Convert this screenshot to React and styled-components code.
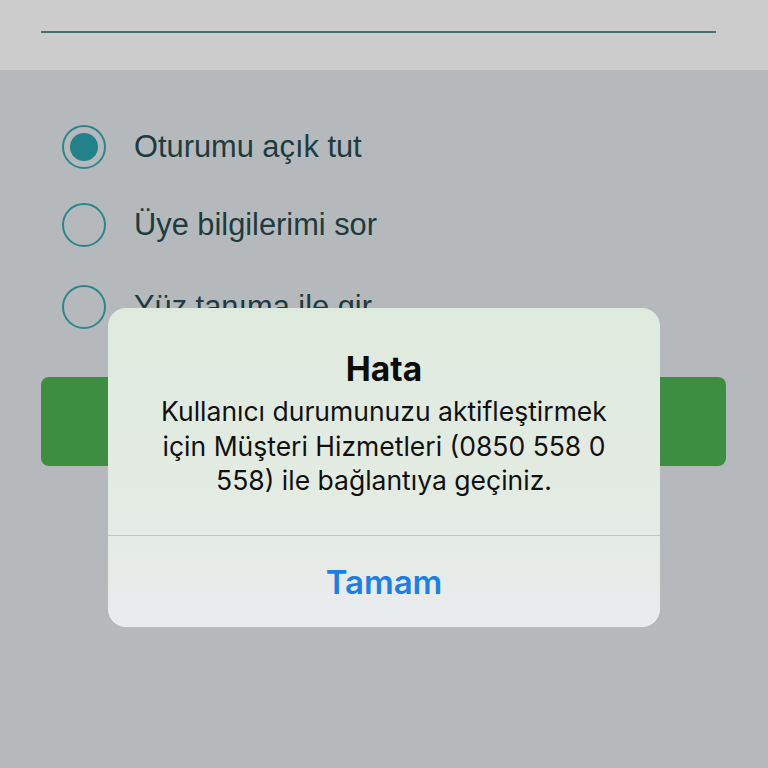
import React from "react";
import styled, { createGlobalStyle } from "styled-components";

const Global = createGlobalStyle`
  html, body { margin: 0; padding: 0; }
  body { width: 768px; height: 768px; overflow: hidden; background: #b5b9bc; }
`;

const Page = styled.div`
  position: relative;
  width: 768px;
  height: 768px;
  background: #b5b9bc;
  font-family: "Liberation Sans", Arial, sans-serif;
`;

const Header = styled.div`
  height: 70px;
  background: #cccccc;
  box-sizing: border-box;
  padding: 31px 52px 0 41px;
`;

const Line = styled.div`
  height: 2px;
  background: #44706f;
`;

const Options = styled.div`
  display: flex;
  flex-direction: column;
  padding: 55px 0 0 62px;
`;

const Row = styled.div`
  display: flex;
  align-items: center;
  gap: 28px;
  height: 44px;
  margin-bottom: ${(p) => p.$mb || 0}px;
`;

const Radio = styled.div`
  width: 44px;
  height: 44px;
  box-sizing: border-box;
  border: 2px solid #2b878c;
  border-radius: 50%;
  display: flex;
  align-items: center;
  justify-content: center;
  flex-shrink: 0;
  &::after {
    content: "";
    display: ${(p) => (p.$checked ? "block" : "none")};
    width: 28px;
    height: 28px;
    border-radius: 50%;
    background: #23828a;
  }
`;

const Label = styled.span`
  font-size: 30.8px;
  color: #1d3c3f;
`;

const GreenButton = styled.div`
  margin: 48px 42px 0 41px;
  height: 89px;
  background: #3e8e41;
  border-radius: 8px;
`;

const Dialog = styled.div`
  position: absolute;
  left: 108px;
  top: 308px;
  width: 552px;
  height: 319px;
  border-radius: 18px;
  overflow: hidden;
  display: flex;
  flex-direction: column;
  background: linear-gradient(180deg, #dfeade 0%, #e3ebe3 60%, #e9ecee 100%);
  font-family: "Inter", "Liberation Sans", sans-serif;
`;

const Body = styled.div`
  height: 228px;
  box-sizing: border-box;
  padding-top: 41px;
  text-align: center;
  border-bottom: 1px solid #c4c9c6;
`;

const Title = styled.div`
  font-size: 33.5px;
  font-weight: 700;
  color: #0b0b0b;
  line-height: 40px;
  margin-bottom: 5px;
`;

const Message = styled.div`
  font-size: 26.5px;
  line-height: 34.5px;
  color: #111;
  white-space: nowrap;
`;

const Action = styled.div`
  flex: 1;
  display: flex;
  align-items: center;
  justify-content: center;
  font-size: 33px;
  font-weight: 600;
  color: #1a7fe9;
`;

export default function App() {
  return (
    <Page>
      <Global />
      <Header>
        <Line />
      </Header>
      <Options>
        <Row $mb={34}>
          <Radio $checked />
          <Label>Oturumu açık tut</Label>
        </Row>
        <Row $mb={38}>
          <Radio />
          <Label>Üye bilgilerimi sor</Label>
        </Row>
        <Row>
          <Radio />
          <Label>Yüz tanıma ile gir</Label>
        </Row>
      </Options>
      <GreenButton />
      <Dialog>
        <Body>
          <Title>Hata</Title>
          <Message>
            Kullanıcı durumunuzu aktifleştirmek
            <br />
            için Müşteri Hizmetleri (0850 558 0
            <br />
            558) ile bağlantıya geçiniz.
          </Message>
        </Body>
        <Action>Tamam</Action>
      </Dialog>
    </Page>
  );
}
